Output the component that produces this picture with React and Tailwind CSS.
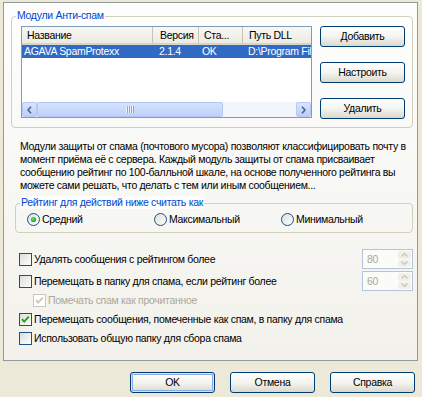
import React from "react";

function XPButton({ children, w = "w-[85px]", isDefault = false }) {
  return (
    <div
      className={`${w} h-[21px] shrink-0 rounded-[3px] border border-[#003C74] bg-linear-to-b from-white via-[#F4F4F0] to-[#DCD8CC] flex items-center justify-center text-black ${
        isDefault ? "shadow-[inset_0_0_0_1px_#CEE7FF,inset_0_0_0_2px_#8CA9E8]" : ""
      }`}
    >
      {children}
    </div>
  );
}

function CheckBox({ checked = false, disabled = false }) {
  const border = disabled ? "#CAC8BB" : "#1C5180";
  const mark = disabled ? "#CAC8BB" : "#21A121";
  return (
    <svg width="13" height="13" viewBox="0 0 13 13" className="shrink-0">
      <defs>
        <linearGradient id={disabled ? "cbgd" : "cbg"} x1="0" y1="0" x2="1" y2="1">
          <stop offset="0" stopColor={disabled ? "#FFFFFF" : "#DCDCD7"} />
          <stop offset="1" stopColor="#FFFFFF" />
        </linearGradient>
      </defs>
      <rect x="0.5" y="0.5" width="12" height="12" fill={`url(#${disabled ? "cbgd" : "cbg"})`} stroke={border} />
      {checked && (
        <path d="M3 6.2 L5.2 8.6 L9.8 3.6" fill="none" stroke={mark} strokeWidth="1.9" />
      )}
    </svg>
  );
}

function Radio({ checked = false }) {
  return (
    <svg width="13" height="13" viewBox="0 0 13 13" className="shrink-0">
      <defs>
        <linearGradient id="rbg" x1="0" y1="0" x2="1" y2="1">
          <stop offset="0" stopColor="#DCDCD7" />
          <stop offset="1" stopColor="#FFFFFF" />
        </linearGradient>
        <radialGradient id="rdot" cx="0.4" cy="0.4" r="0.6">
          <stop offset="0" stopColor="#6BE268" />
          <stop offset="1" stopColor="#21A121" />
        </radialGradient>
      </defs>
      <circle cx="6.5" cy="6.5" r="6" fill="url(#rbg)" stroke="#1C5180" />
      {checked && <circle cx="6.5" cy="6.5" r="2.6" fill="url(#rdot)" />}
    </svg>
  );
}

function SpinBox({ value }) {
  return (
    <div className="w-[51px] h-[20px] border border-[#B3C4DC] bg-[#FBFBF8] flex items-stretch shrink-0">
      <div className="flex-1 pl-[4px] flex items-center text-[#ACA899]">{value}</div>
      <div className="w-[15px] flex flex-col gap-[1px] p-[1px]">
        <div className="flex-1 rounded-[2px] bg-[#F0EFE8] flex items-center justify-center">
          <svg width="7" height="4" viewBox="0 0 7 4">
            <path d="M0.5 3.5 L3.5 0.5 L6.5 3.5" fill="none" stroke="#C9C7BA" strokeWidth="1.3" />
          </svg>
        </div>
        <div className="flex-1 rounded-[2px] bg-[#F0EFE8] flex items-center justify-center">
          <svg width="7" height="4" viewBox="0 0 7 4">
            <path d="M0.5 0.5 L3.5 3.5 L6.5 0.5" fill="none" stroke="#C9C7BA" strokeWidth="1.3" />
          </svg>
        </div>
      </div>
    </div>
  );
}

function ScrollArrow({ dir }) {
  return (
    <div className="w-[15px] h-[15px] shrink-0 rounded-[2px] border border-[#B7CAF5] bg-linear-to-b from-[#D9E5FE] to-[#B9CEF8] flex items-center justify-center">
      <svg width="5" height="8" viewBox="0 0 5 8">
        <path
          d={dir === "left" ? "M4 0.8 L1 4 L4 7.2" : "M1 0.8 L4 4 L1 7.2"}
          fill="none"
          stroke="#4D6185"
          strokeWidth="1.6"
        />
      </svg>
    </div>
  );
}

function GroupBox({ title, className, children }) {
  return (
    <div className={`relative border border-[#D0D0BF] rounded-[4px] ${className}`}>
      <span className="absolute left-[4px] -top-[8px] px-[1px] leading-[13px] bg-[#FDFDFC] text-[#0046D5]">
        {title}
      </span>
      {children}
    </div>
  );
}

export default function App() {
  return (
    <div className="w-[422px] h-[397px] overflow-hidden bg-[#ECE9D8] flex flex-col text-[10.5px] tracking-[-0.3px] leading-[13px] text-black font-['Liberation_Sans',Arial,sans-serif]">
      {/* Tab page */}
      <div className="ml-[3px] mt-[2px] w-[415px] h-[359px] shrink-0 border border-[#919B9C] bg-linear-to-b from-[#FEFEFE] to-[#F2F1EB] flex flex-col">
        {/* Group 1 */}
        <GroupBox title="Модули Анти-спам" className="ml-[7px] mt-[13px] w-[402px] h-[112px] flex pl-[9px] pt-[9px] gap-[8px]">
          {/* List view */}
          <div className="w-[291px] h-[92px] border border-[#7F9DB9] bg-white flex flex-col overflow-hidden shrink-0">
            <div className="h-[18px] shrink-0 flex bg-linear-to-b from-[#F8F8F4] to-[#EBEAE3] border-b-2 border-[#D8D5C7]">
              <div className="w-[131px] shrink-0 pl-[5px] flex items-center border-r border-[#C7C5B2]">Название</div>
              <div className="w-[46px] shrink-0 pl-[7px] flex items-center border-r border-[#C7C5B2]">Версия</div>
              <div className="w-[44px] shrink-0 pl-[5px] flex items-center border-r border-[#C7C5B2]">Ста...</div>
              <div className="flex-1 pl-[6px] flex items-center whitespace-nowrap overflow-hidden">Путь DLL</div>
            </div>
            <div className="h-[13px] shrink-0 flex bg-[#316AC5] text-white whitespace-nowrap overflow-hidden">
              <div className="w-[131px] shrink-0 pl-[2px] flex items-center">AGAVA SpamProtexx</div>
              <div className="w-[46px] shrink-0 pl-[6px] flex items-center">2.1.4</div>
              <div className="w-[44px] shrink-0 pl-[3px] flex items-center">OK</div>
              <div className="flex-1 pl-[5px] flex items-center overflow-hidden">D:\Program Files\AGAVA</div>
            </div>
            <div className="flex-1" />
            {/* Horizontal scrollbar */}
            <div className="h-[15px] shrink-0 flex bg-[#F3F5FC]">
              <ScrollArrow dir="left" />
              <div className="w-[186px] h-[15px] shrink-0 rounded-[2px] border border-[#B1C6F4] bg-linear-to-b from-[#D6E2FD] to-[#BFD1FA] flex items-center justify-center">
                <svg width="8" height="7" viewBox="0 0 8 7">
                  <path d="M0.5 0 V7 M2.5 0 V7 M4.5 0 V7 M6.5 0 V7" stroke="#EEF3FE" strokeWidth="1" />
                  <path d="M1.5 0 V7 M3.5 0 V7 M5.5 0 V7 M7.5 0 V7" stroke="#8CA4DC" strokeWidth="1" />
                </svg>
              </div>
              <div className="flex-1" />
              <ScrollArrow dir="right" />
            </div>
          </div>
          {/* Buttons */}
          <div className="flex flex-col gap-[15px]">
            <XPButton>Добавить</XPButton>
            <XPButton>Настроить</XPButton>
            <XPButton>Удалить</XPButton>
          </div>
        </GroupBox>

        {/* Description */}
        <div className="ml-[16px] mt-[12px] whitespace-nowrap">
          <div>Модули защиты от спама (почтового мусора) позволяют классифицировать почту в</div>
          <div>момент приёма её с сервера. Каждый модуль защиты от спама присваивает</div>
          <div>сообщению рейтинг по 100-балльной шкале, на основе полученного рейтинга вы</div>
          <div>можете сами решать, что делать с тем или иным сообщением...</div>
        </div>

        {/* Group 2 */}
        <GroupBox
          title="Рейтинг для действий ниже считать как"
          className="ml-[11px] mt-[11px] w-[398px] h-[30px] flex items-start pl-[11px] pt-[9px]"
        >
          <div className="w-[127px] flex items-center gap-[2px]">
            <Radio checked />
            <span>Средний</span>
          </div>
          <div className="w-[127px] flex items-center gap-[2px]">
            <Radio />
            <span>Максимальный</span>
          </div>
          <div className="w-[127px] flex items-center gap-[2px]">
            <Radio />
            <span>Минимальный</span>
          </div>
        </GroupBox>

        {/* Checkbox rows */}
        <div className="ml-[15px] mt-[16px] w-[394px] flex flex-col">
          <div className="h-[20px] flex items-center justify-between">
            <div className="flex items-center gap-[2px]">
              <CheckBox />
              <span>Удалять сообщения с рейтингом более</span>
            </div>
            <SpinBox value="80" />
          </div>
          <div className="mt-[2px] h-[20px] flex items-center justify-between">
            <div className="flex items-center gap-[2px]">
              <CheckBox />
              <span>Перемещать в папку для спама, если рейтинг более</span>
            </div>
            <SpinBox value="60" />
          </div>
          <div className="mt-[3px] h-[13px] flex items-center gap-[2px] pl-[14px] text-[#ACA899]">
            <CheckBox checked disabled />
            <span>Помечать спам как прочитанное</span>
          </div>
          <div className="mt-[6px] h-[13px] flex items-center gap-[2px]">
            <CheckBox checked />
            <span>Перемещать сообщения, помеченные как спам, в папку для спама</span>
          </div>
          <div className="mt-[6px] h-[13px] flex items-center gap-[2px]">
            <CheckBox />
            <span>Использовать общую папку для сбора спама</span>
          </div>
        </div>
      </div>

      {/* Dialog buttons */}
      <div className="ml-[130px] mt-[11px] flex gap-[15px]">
        <XPButton isDefault>OK</XPButton>
        <XPButton>Отмена</XPButton>
        <XPButton>Справка</XPButton>
      </div>
    </div>
  );
}
